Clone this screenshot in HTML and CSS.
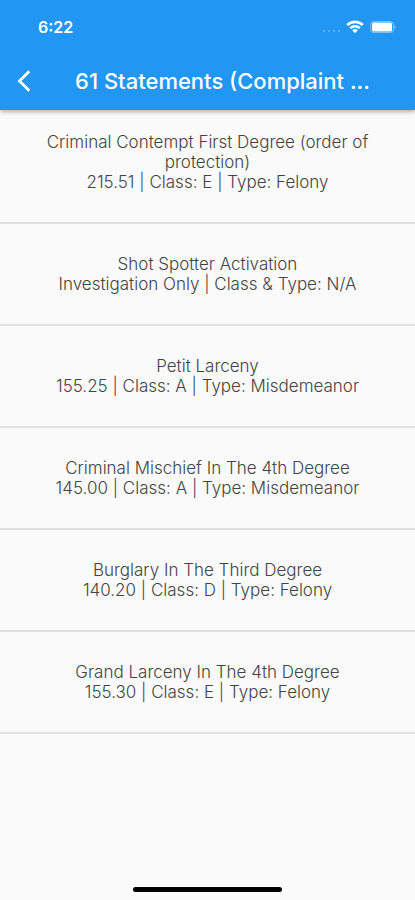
FILE: index.html
```html
<!DOCTYPE html>
<html lang="en">
<head>
<meta charset="utf-8">
<meta name="viewport" content="width=device-width, initial-scale=1">
<title>61 Statements</title>
<link rel="stylesheet" href="styles.css">
</head>
<body>
<header class="app-header">
  <div class="status-bar">
    <time class="clock">6:22</time>
    <div class="status-icons">
      <svg width="20" height="16" viewBox="0 0 20 16" fill="#fff" fill-opacity=".25" aria-hidden="true"><circle cx="3" cy="12" r="1.2"/><circle cx="8" cy="12" r="1.2"/><circle cx="13" cy="12" r="1.2"/><circle cx="18" cy="12" r="1.2"/></svg>
      <svg width="18" height="16" viewBox="0 0 18 16" aria-hidden="true"><g fill="none" stroke="#fff" stroke-width="2.6"><path d="M1.2 6a11.2 11.2 0 0 1 15.6 0"/><path d="M4.2 9.1a7 7 0 0 1 9.6 0"/></g><path fill="#fff" d="M6.2 11.3a4.2 4.2 0 0 1 5.6 0L9 14.2z"/></svg>
      <svg width="27" height="16" viewBox="0 0 27 16" aria-hidden="true"><rect x="1.5" y="2.5" width="23" height="11" rx="3" fill="none" stroke="#fff" stroke-opacity=".4"/><rect x="3" y="3.5" width="20" height="9" rx="1.5" fill="#fff"/><path d="M25.500 6.200a2 2 0 0 1 0 3.600z" fill="#fff" fill-opacity=".6"/></svg>
    </div>
  </div>
  <div class="title-bar">
    <button class="back" type="button" aria-label="Back"><svg width="14" height="22" viewBox="0 0 14 22" fill="none" stroke="#fff" stroke-width="2.8" aria-hidden="true"><path d="M13.300 1.200 3.500 11l9.800 9.800"/></svg></button>
    <h1 class="title">61 Statements (Complaint ...</h1>
  </div>
</header>
<main>
  <ul class="statements">
    <li class="statement"><p>Criminal Contempt First Degree (order of protection)</p><p>215.51 | Class: E | Type: Felony</p></li>
    <li class="statement"><p>Shot Spotter Activation</p><p>Investigation Only | Class &amp; Type: N/A</p></li>
    <li class="statement"><p>Petit Larceny</p><p>155.25 | Class: A | Type: Misdemeanor</p></li>
    <li class="statement"><p>Criminal Mischief In The 4th Degree</p><p>145.00 | Class: A | Type: Misdemeanor</p></li>
    <li class="statement"><p>Burglary In The Third Degree</p><p>140.20 | Class: D | Type: Felony</p></li>
    <li class="statement"><p>Grand Larceny In The 4th Degree</p><p>155.30 | Class: E | Type: Felony</p></li>
  </ul>
</main>
<footer class="home"><div class="home-bar"></div></footer>
</body>
</html>
```
FILE: styles.css
```css
* {
  box-sizing: border-box;
}

body {
  margin: 0;
  min-height: 100vh;
  display: flex;
  flex-direction: column;
  background: #fafafa;
  color: #444;
  font-family: Inter, "Liberation Sans", sans-serif;
}

.app-header {
  background: #2196f3;
  color: #fff;
  box-shadow: 0 1px 5px rgba(0, 0, 0, 0.4);
}

.status-bar {
  display: flex;
  align-items: center;
  justify-content: space-between;
  height: 52px;
  padding: 2px 19px 0 38px;
}

.clock {
  font-size: 16px;
  font-weight: 600;
}

.status-icons {
  display: flex;
  align-items: center;
  gap: 5px;
}

.title-bar {
  display: flex;
  align-items: center;
  height: 58px;
  padding-left: 16px;
}

.back {
  display: flex;
  padding: 0;
  border: 0;
  background: none;
}

.title {
  flex: 1;
  margin: 0;
  font-size: 22px;
  font-weight: 500;
  line-height: 28px;
  text-align: center;
  white-space: nowrap;
}

main {
  flex: 1;
}

.statements {
  margin: 0;
  padding: 0;
  list-style: none;
}

.statement {
  padding: 30px 24px;
  border-bottom: 2px solid #e0e0e0;
  font-size: 17px;
  font-weight: 300;
  line-height: 20px;
  text-align: center;
}

.statement:first-child {
  padding-top: 22px;
}

.statement p {
  margin: 0;
}

.home {
  display: flex;
  justify-content: center;
  padding-bottom: 8px;
}

.home-bar {
  width: 36%;
  height: 5px;
  border-radius: 3px;
  background: #000;
}
```
